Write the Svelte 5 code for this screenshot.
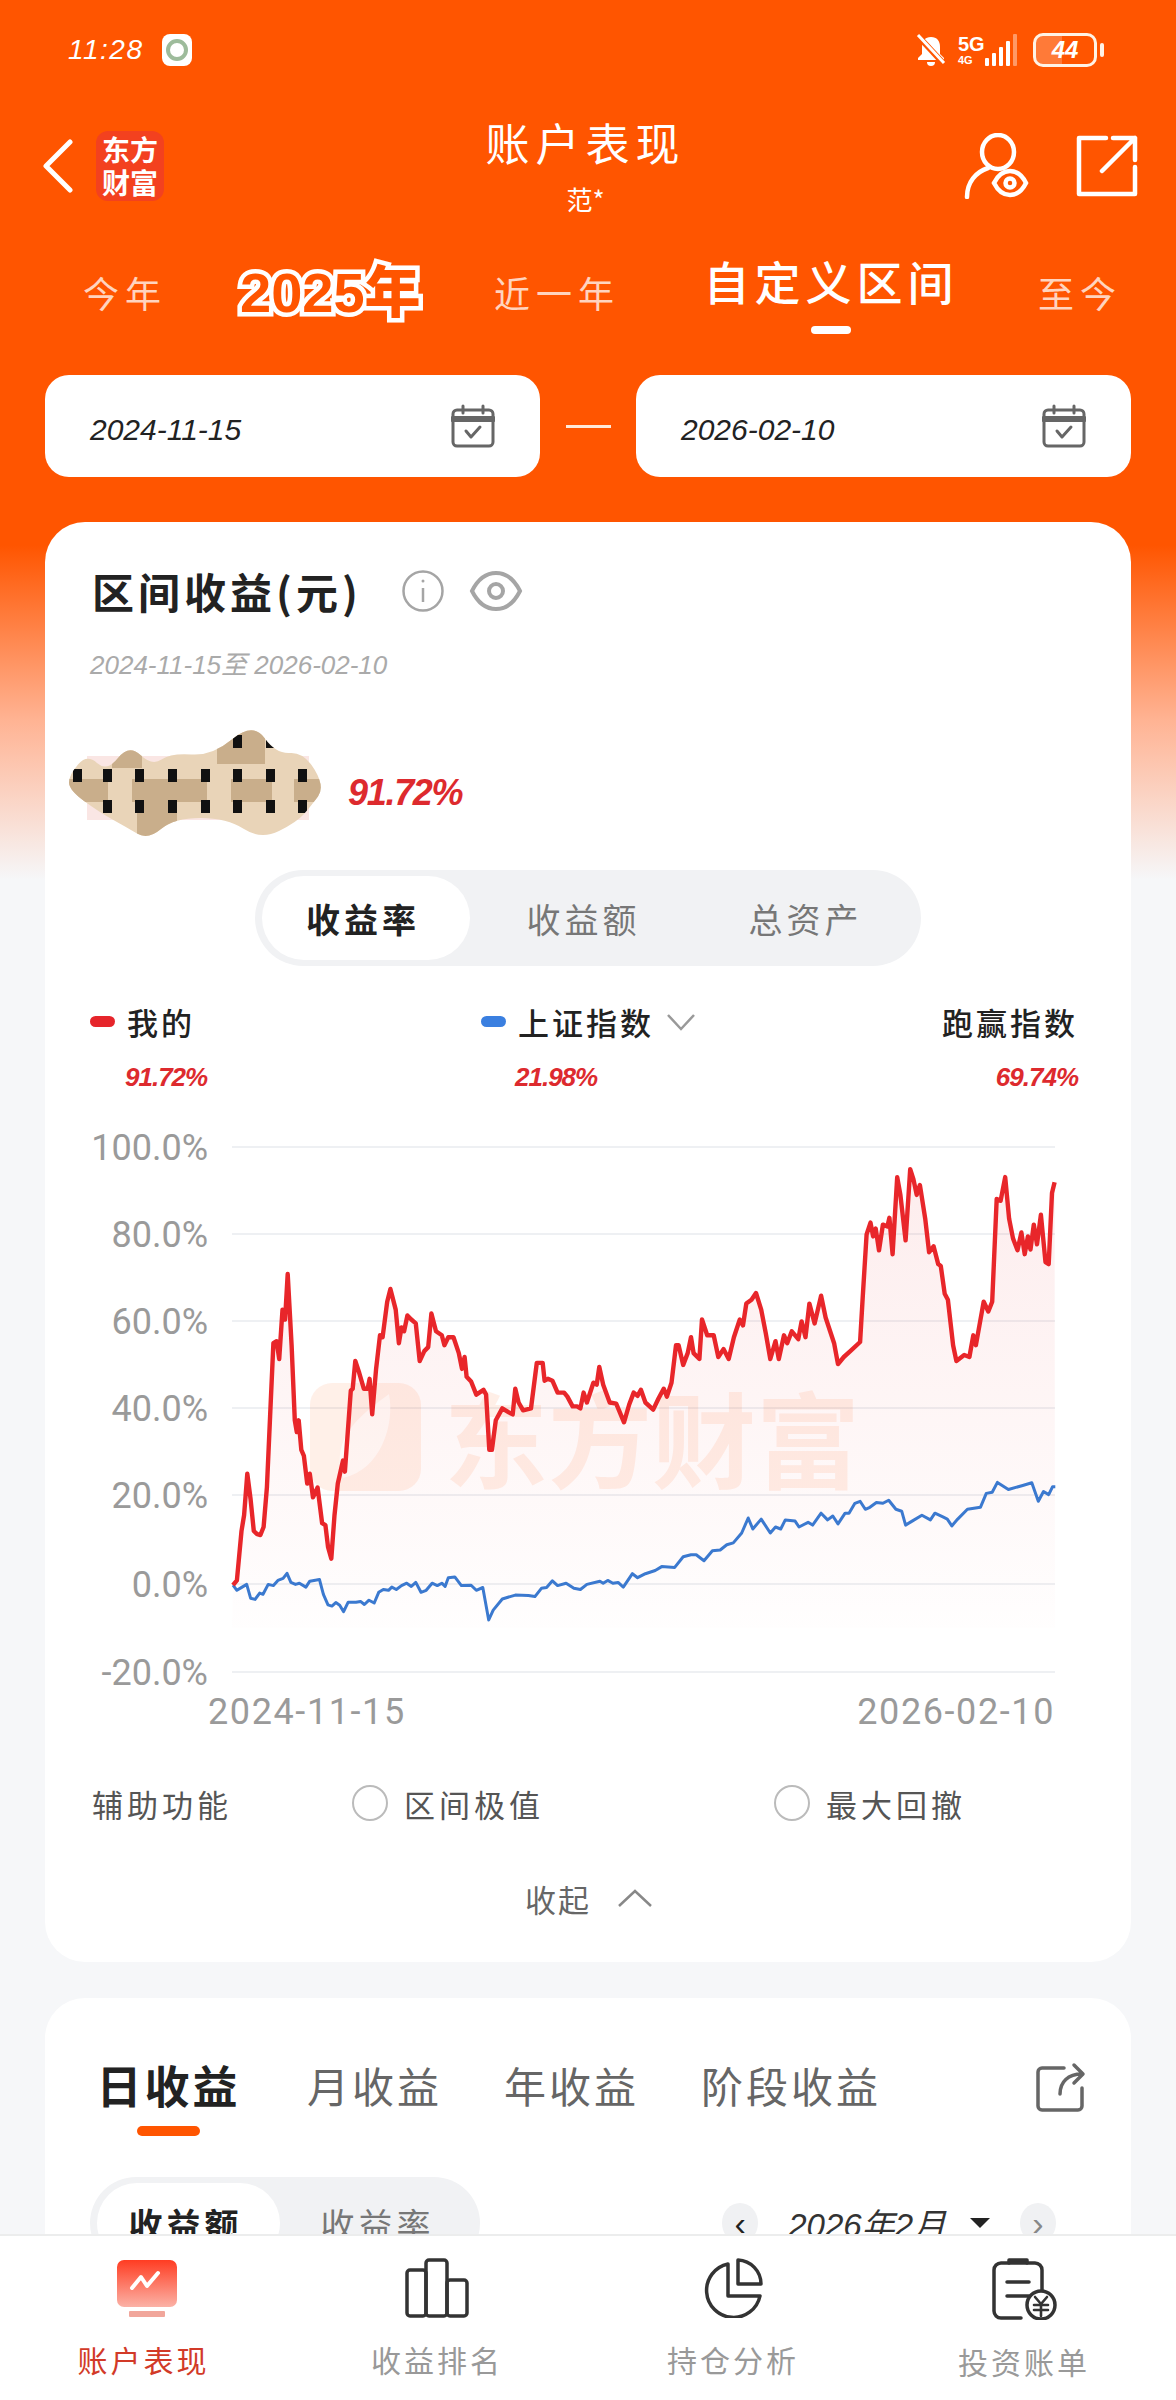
<script>
  // chart traces, read off the reference (zoom coordinates of the chart crop)
  const redRaw = [266,1227,272,1215,279,1090,283,1050,288,945,293,1010,298,1090,303,1098,308,1100,313,1080,318,980,323,800,328,615,333,610,337,655,342,530,346,555,350,440,356,620,361,810,364,840,367,810,371,885,375,900,380,970,384,945,389,1005,396,980,403,1070,408,1075,412,1130,417,1160,422,1050,427,970,435,912,438,940,447,735,450,730,454,660,460,690,467,730,473,730,476,705,480,795,486,680,492,595,496,600,503,510,508,478,516,530,521,615,525,575,529,585,534,545,540,555,547,565,553,660,560,635,566,625,571,540,578,585,587,595,591,620,597,600,605,600,613,640,618,680,622,650,625,700,632,712,640,745,651,733,655,745,660,885,664,885,670,810,680,780,690,790,696,795,700,730,705,765,712,785,724,780,733,665,742,665,745,710,750,705,757,710,765,740,775,740,780,750,788,775,795,775,800,780,805,740,810,765,820,715,825,720,829,675,835,720,845,765,855,768,867,815,875,770,882,740,888,748,893,733,900,765,912,783,920,755,928,730,933,750,940,715,947,620,951,620,958,670,965,640,970,600,974,640,983,655,987,555,995,595,1005,595,1012,650,1020,630,1028,655,1036,600,1045,555,1050,570,1055,515,1063,505,1070,488,1078,530,1085,590,1092,655,1100,610,1105,655,1113,595,1118,615,1125,585,1135,605,1140,560,1146,600,1152,515,1160,565,1170,495,1177,550,1185,590,1190,615,1196,668,1205,650,1215,635,1230,612,1234,500,1240,340,1246,310,1250,345,1254,325,1259,380,1265,315,1272,320,1275,298,1280,390,1287,195,1292,240,1300,355,1307,175,1312,200,1317,240,1322,215,1330,300,1336,385,1343,370,1350,415,1354,420,1360,490,1365,505,1373,620,1378,660,1390,645,1398,650,1404,595,1408,620,1420,510,1427,535,1433,510,1440,250,1446,255,1453,195,1459,300,1465,350,1472,380,1478,335,1483,390,1488,345,1492,378,1497,315,1502,365,1508,290,1515,410,1520,415,1525,235,1529,208];
  const blueRaw = [266,1227,272,1240,280,1232,287,1225,293,1260,300,1263,307,1247,312,1250,320,1225,328,1228,335,1215,343,1210,349,1197,355,1220,362,1225,368,1222,378,1232,384,1217,399,1213,405,1250,412,1277,418,1280,424,1271,430,1278,436,1294,443,1270,455,1270,462,1268,468,1276,475,1265,483,1272,490,1245,497,1238,505,1240,510,1232,517,1238,525,1228,533,1222,540,1230,547,1220,555,1245,563,1240,572,1222,580,1228,587,1222,592,1230,597,1208,607,1206,617,1228,632,1227,640,1240,650,1233,659,1315,666,1290,680,1262,700,1252,720,1253,730,1256,740,1235,748,1233,757,1216,765,1228,778,1222,790,1235,800,1238,810,1225,830,1217,835,1222,842,1215,850,1222,858,1220,866,1232,880,1198,888,1208,900,1198,915,1190,925,1180,945,1182,958,1155,970,1150,978,1150,990,1165,1003,1140,1015,1138,1025,1125,1035,1120,1048,1095,1058,1057,1065,1085,1078,1060,1092,1095,1100,1080,1108,1085,1115,1062,1130,1065,1136,1080,1150,1068,1157,1075,1170,1045,1180,1062,1188,1052,1196,1072,1207,1045,1213,1045,1222,1020,1230,1015,1238,1035,1245,1030,1255,1018,1265,1020,1274,1012,1285,1035,1294,1040,1300,1075,1310,1065,1325,1050,1338,1062,1345,1045,1358,1055,1364,1060,1371,1077,1380,1060,1395,1035,1415,1030,1424,995,1433,992,1441,967,1458,985,1480,975,1494,968,1504,1015,1512,990,1520,998,1526,978,1530,978];

  // chart svg starts at x 45, y 1120 of the page
  const toPoints = (raw) => {
    const out = [];
    for (let i = 0; i < raw.length; i += 2) {
      const x = 60 + raw[i] / 1.5373 - 45;
      const y = 1100 + raw[i + 1] / 2.529 - 1120;
      out.push(x.toFixed(1) + "," + y.toFixed(1));
    }
    return out.join(" ");
  };
  const redLine = toPoints(redRaw);
  const blueLine = toPoints(blueRaw);
  const redArea = "187,508 " + redLine + " 1010,508";

  const grid = [
    { label: "100.0%", y: 27 },
    { label: "80.0%", y: 114 },
    { label: "60.0%", y: 201 },
    { label: "40.0%", y: 288 },
    { label: "20.0%", y: 375 },
    { label: "0.0%", y: 464 },
    { label: "-20.0%", y: 552 },
  ];

  const squares = [];
  for (const x of [6, 36, 68, 101, 134, 166, 199, 231]) {
    squares.push({ x, y: 41 }, { x, y: 72 });
  }
  squares.push({ x: 166, y: 7 }, { x: 199, y: 7 });

  // outline of the scribbled-over amount, smoothed through the midpoints
  const blobPts = [[2,47],[20,26],[40,44],[62,16],[85,38],[104,25],[145,28],[186,-6],[209,26],[237,24],[258,59],[244,78],[230,94],[194,112],[160,90],[107,90],[81,112],[59,99],[32,84],[2,62]];
  const mid = (a, b) => ((a[0] + b[0]) / 2).toFixed(1) + " " + ((a[1] + b[1]) / 2).toFixed(1);
  const blobPath =
    "M" + mid(blobPts[blobPts.length - 1], blobPts[0]) +
    blobPts.map((p, i) => "Q" + p[0] + " " + p[1] + " " + mid(p, blobPts[(i + 1) % blobPts.length])).join("") +
    "Z";
</script>

<div class="page">
  <div class="scroll">
    <header class="status">
      <span class="time">11:28</span>
      <span class="app-dot"><i></i></span>
      <span class="status-right">
        <svg width="32" height="34" viewBox="0 0 32 34" fill="#fff">
          <path d="M16 4c-6 0-9 4-9 10v7l-4 4v2h26v-2l-4-4v-7c0-6-3-10-9-10z" />
          <path d="M12 29h8a4 4 0 0 1-8 0z" />
          <path d="M3 3l26 28" stroke="#ff5500" stroke-width="6" />
          <path d="M3 2l26 28" stroke="#fff" stroke-width="3" />
        </svg>
        <span class="net">5G<small>4G</small></span>
        <svg class="bars" width="36" height="34" viewBox="0 0 36 34" fill="#fff">
          <rect x="0" y="25" width="4" height="8" rx="1" />
          <rect x="7" y="20" width="4" height="13" rx="1" />
          <rect x="14" y="14" width="4" height="19" rx="1" />
          <rect x="21" y="8" width="4" height="25" rx="1" />
          <rect x="28" y="1" width="4" height="32" rx="1" opacity=".4" />
        </svg>
        <span class="battery"><b>44</b></span>
        <span class="nub"></span>
      </span>
    </header>

    <div class="head">
      <div class="head-left">
        <svg width="32" height="54" viewBox="0 0 32 54" fill="none" stroke="#fff" stroke-width="5" stroke-linecap="round" stroke-linejoin="round">
          <path d="M28 3 4 27l24 24" />
        </svg>
        <span class="logo">东方<br />财富</span>
      </div>
      <div class="head-title">
        <div class="title">账户表现</div>
        <div class="sub">范*</div>
      </div>
      <div class="head-right">
        <svg width="66" height="66" viewBox="0 0 66 66" fill="none" stroke="#fff" stroke-width="4.5" stroke-linecap="round">
          <ellipse cx="34" cy="19" rx="16" ry="17" />
          <path d="M3 64c0-15 9-25 21-29" />
          <path d="M30 50c4-8 10-12 16-12s12 4 16 12c-4 8-10 12-16 12s-12-4-16-12z" />
          <circle cx="46" cy="50" r="4.5" />
        </svg>
        <svg width="62" height="62" viewBox="0 0 62 62" fill="none" stroke="#fff" stroke-width="4.5" stroke-linecap="round" stroke-linejoin="round">
          <path d="M30 3H3v56h56V32" />
          <path d="M26 36 59 3M37 3h22v22" />
        </svg>
      </div>
    </div>

    <div class="periods">
      <span class="period">今年</span>
      <span class="period year">2025年</span>
      <span class="period">近一年</span>
      <span class="period active">自定义区间<i></i></span>
      <span class="period">至今</span>
    </div>

    <div class="dates">
      <div class="date">
        <span>2024-11-15</span>
        <svg width="44" height="44" viewBox="0 0 44 44" fill="none" stroke="#666" stroke-width="3" stroke-linecap="round" stroke-linejoin="round">
          <rect x="2" y="6" width="40" height="36" rx="4" />
          <path d="M2 15h40" stroke-width="6" />
          <path d="M12 2v7M32 2v7" />
          <path d="m15 27 5 6 9-10" />
        </svg>
      </div>
      <span class="dash"></span>
      <div class="date">
        <span>2026-02-10</span>
        <svg width="44" height="44" viewBox="0 0 44 44" fill="none" stroke="#666" stroke-width="3" stroke-linecap="round" stroke-linejoin="round">
          <rect x="2" y="6" width="40" height="36" rx="4" />
          <path d="M2 15h40" stroke-width="6" />
          <path d="M12 2v7M32 2v7" />
          <path d="m15 27 5 6 9-10" />
        </svg>
      </div>
    </div>

    <section class="card">
      <div class="card-title">
        <h2>区间收益(元)</h2>
        <svg class="info" width="42" height="42" viewBox="0 0 42 42" fill="none" stroke="#a5a5a5" stroke-width="2.5">
          <circle cx="21" cy="21" r="19.5" />
          <path d="M21 18v14" />
          <circle cx="21" cy="11" r="1.5" fill="#a5a5a5" stroke="none" />
        </svg>
        <svg class="eye" width="54" height="42" viewBox="0 0 54 42" fill="none" stroke="#a5a5a5" stroke-width="4">
          <path d="M3 21C9 9 17 3 27 3s18 6 24 18c-6 12-14 18-24 18S9 33 3 21z" />
          <circle cx="27" cy="21" r="7" />
        </svg>
      </div>
      <div class="range">2024-11-15至 2026-02-10</div>

      <div class="amount">
        <svg width="256" height="108" viewBox="0 0 256 108">
          <defs>
            <clipPath id="blob">
              <path d={blobPath} />
            </clipPath>
          </defs>
          <rect x="20" y="28" width="222" height="64" fill="#f6d5d2" opacity=".6" />
          <g clip-path="url(#blob)">
            <rect width="256" height="108" fill="#e9d4b8" />
            <rect y="51" width="256" height="23" fill="#c9ae8b" />
            <rect x="150" width="48" height="36" fill="#c9ae8b" />
            <rect x="70" y="74" width="40" height="34" fill="#c9ae8b" />
            <rect x="45" y="18" width="30" height="22" fill="#c9ae8b" />
            <rect x="41" y="51" width="24" height="23" fill="#e9d4b8" />
            <rect x="205" y="51" width="22" height="23" fill="#e9d4b8" />
            <rect x="140" y="51" width="24" height="23" fill="#e9d4b8" />
            {#each squares as s}
              <rect x={s.x} y={s.y} width="9" height="13" fill="#111" />
            {/each}
          </g>
        </svg>
        <span class="rate">91.72%</span>
      </div>

      <div class="seg-wrap">
        <div class="seg">
          <span class="seg-item on">收益率</span>
          <span class="seg-item">收益额</span>
          <span class="seg-item">总资产</span>
        </div>
      </div>

      <div class="legend">
        <span class="legend-item"><i class="red"></i>我的</span>
        <span class="legend-item">
          <i class="blue"></i>上证指数
          <svg width="30" height="18" viewBox="0 0 30 18" fill="none" stroke="#999" stroke-width="2.5"><path d="m2 2 13 14L28 2" /></svg>
        </span>
        <span class="legend-item">跑赢指数</span>
      </div>
      <div class="values">
        <span class="v1">91.72%</span>
        <span class="v2">21.98%</span>
        <span class="v3">69.74%</span>
      </div>

      <svg class="chart" width="1086" height="620" viewBox="0 0 1086 620">
        <defs>
          <linearGradient id="areaFill" x1="0" y1="0" x2="0" y2="1">
            <stop offset="0" stop-color="#e8262a" stop-opacity=".085" />
            <stop offset="1" stop-color="#e8262a" stop-opacity=".006" />
          </linearGradient>
        </defs>
        {#each grid as g}
          <line x1="187" x2="1010" y1={g.y} y2={g.y} stroke="#e8ebef" stroke-width="1.5" />
          <text x="163" y={g.y + 13} text-anchor="end" class="axis">{g.label}</text>
        {/each}
        <g class="watermark">
          <rect x="265" y="263" width="111" height="108" rx="22" fill="#ff5500" opacity=".09" />
          <path d="M298 358c-14-42 22-66 46-84 6 30-8 76-46 84z" fill="#fff" opacity=".7" />
          <text x="399" y="361" class="mark">东方财富</text>
        </g>
        <polygon points={redArea} fill="url(#areaFill)" />
        <polyline points={blueLine} fill="none" stroke="#3b79cf" stroke-width="3" stroke-linejoin="round" />
        <polyline points={redLine} fill="none" stroke="#e8262a" stroke-width="4.4" stroke-linejoin="round" />
        <text x="163" y="604" class="axis dates-x">2024-11-15</text>
        <text x="1010" y="604" text-anchor="end" class="axis dates-x">2026-02-10</text>
      </svg>

      <div class="aux">
        <span class="aux-name">辅助功能</span>
        <span class="aux-opt first"><i></i>区间极值</span>
        <span class="aux-opt second"><i></i>最大回撤</span>
      </div>

      <div class="collapse">
        <span>收起</span>
        <svg width="36" height="20" viewBox="0 0 36 20" fill="none" stroke="#888" stroke-width="2.5"><path d="M2 18 18 3l16 15" /></svg>
      </div>
    </section>

    <section class="card second-card">
      <div class="income-tabs">
        <div class="income-on">日收益<i></i></div>
        <span class="t2">月收益</span>
        <span class="t3">年收益</span>
        <span class="t4">阶段收益</span>
        <svg class="share" width="50" height="50" viewBox="0 0 50 50" fill="none" stroke="#666" stroke-width="3.5" stroke-linecap="round" stroke-linejoin="round">
          <path d="M28 6H6a4 4 0 0 0-4 4v34a4 4 0 0 0 4 4h36a4 4 0 0 0 4-4V26" />
          <path d="M24 32c0-12 8-20 22-20M38 3l9 9-9 9" />
        </svg>
      </div>
      <div class="sub-row">
        <div class="seg small">
          <span class="seg-item on">收益额</span>
          <span class="seg-item">收益率</span>
        </div>
        <div class="month">
          <span class="circle dark">‹</span>
          <span class="month-text">2026年2月</span>
          <span class="tri"></span>
          <span class="circle">›</span>
        </div>
      </div>
      <div class="rest"></div>
    </section>
  </div>

  <nav class="tabbar">
    <div class="tab current">
      <svg class="tab-icon-first" width="62" height="60" viewBox="0 0 62 60">
        <defs>
          <linearGradient id="tabRed" x1="0" y1="0" x2="0" y2="1">
            <stop offset="0" stop-color="#ff3c22" />
            <stop offset="1" stop-color="#fbb2a6" />
          </linearGradient>
        </defs>
        <rect x="1" y="2" width="60" height="47" rx="7" fill="url(#tabRed)" />
        <path d="M16 30 25 19l6 9 11-13" fill="none" stroke="#fff" stroke-width="4" stroke-linecap="round" stroke-linejoin="round" />
        <rect x="13" y="53" width="36" height="6" rx="1" fill="#f1a69b" />
      </svg>
      <span>账户表现</span>
    </div>
    <div class="tab">
      <svg width="64" height="60" viewBox="0 0 64 60" fill="none" stroke="#333" stroke-width="3.5" stroke-linejoin="round">
        <rect x="2" y="12" width="19" height="46" rx="3" />
        <rect x="21" y="2" width="21" height="56" rx="3" />
        <rect x="42" y="22" width="20" height="36" rx="3" />
      </svg>
      <span>收益排名</span>
    </div>
    <div class="tab">
      <svg width="62" height="60" viewBox="0 0 62 60" fill="none" stroke="#333" stroke-width="3.5" stroke-linejoin="round">
        <path d="M26 6a27 27 0 1 0 32 32H26z" />
        <path d="M36 2a24 24 0 0 1 23 24H36z" />
      </svg>
      <span>持仓分析</span>
    </div>
    <div class="tab">
      <svg width="66" height="62" viewBox="0 0 66 62" fill="none" stroke="#333" stroke-width="3.5" stroke-linecap="round" stroke-linejoin="round">
        <path d="M30 60H10a7 7 0 0 1-7-7V12a7 7 0 0 1 7-7h34a7 7 0 0 1 7 7v20" />
        <path d="M18 5V2h18v3" fill="#333" />
        <path d="M16 24h22M16 38h22" />
        <circle cx="50" cy="47" r="14" />
        <path d="m44 39 6 7 6-7M43 47h14M43 52h14M50 46v12" stroke-width="2.6" />
      </svg>
      <span>投资账单</span>
    </div>
  </nav>
</div>

<style>
  :global(body) {
    margin: 0;
    background: #f6f7f9;
  }

  .page {
    width: 1176px;
    height: 2400px;
    display: flex;
    flex-direction: column;
    overflow: hidden;
    font-family: "Noto Sans CJK SC", "Noto Sans", sans-serif;
    color: #222;
  }

  .scroll {
    flex: 1;
    min-height: 0;
    overflow: hidden;
    background: linear-gradient(#ff5500 0, #ff5500 545px, #ffb393 720px, #f6f7f9 880px);
  }

  /* status bar */
  .status {
    height: 100px;
    display: flex;
    align-items: center;
    padding: 0 78px 0 68px;
    color: #fff;
    box-sizing: border-box;
  }
  .time {
    font: italic 28px "Liberation Sans", sans-serif;
    letter-spacing: 1.5px;
  }
  .app-dot {
    width: 30px;
    height: 32px;
    margin-left: 18px;
    border-radius: 8px;
    background: #fff;
    display: flex;
    align-items: center;
    justify-content: center;
  }
  .app-dot i {
    width: 14px;
    height: 14px;
    border: 4px solid #9dbb9b;
    border-radius: 50%;
  }
  .status-right {
    margin-left: auto;
    display: flex;
    align-items: center;
  }
  .net {
    margin-left: 11px;
    font: 700 20px/20px "Liberation Sans", sans-serif;
    display: flex;
    flex-direction: column;
    width: 26px;
  }
  .net small {
    font-size: 11px;
    line-height: 13px;
  }
  .bars {
    margin-left: 1px;
  }
  .battery {
    width: 64px;
    height: 34px;
    margin-left: 12px;
    box-sizing: border-box;
    border: 3px solid #fff3e6;
    border-radius: 10px;
    background: linear-gradient(90deg, rgba(255, 255, 255, 0.22) 44%, transparent 44%);
    display: flex;
    align-items: center;
    justify-content: center;
  }
  .battery b {
    font: italic 700 24px "Liberation Sans", sans-serif;
  }
  .nub {
    width: 4px;
    height: 14px;
    margin-left: 3px;
    margin-right: -6px;
    border-radius: 2px;
    background: #fff3e6;
  }

  /* title row */
  .head {
    display: grid;
    grid-template-columns: 1fr auto 1fr;
    align-items: center;
    padding: 17px 38px 0 42px;
    color: #fff;
  }
  .head-left {
    display: flex;
    align-items: center;
    gap: 22px;
  }
  .logo {
    width: 68px;
    height: 70px;
    border-radius: 12px;
    background: #f3411f;
    font-size: 28px;
    font-weight: 700;
    line-height: 33px;
    text-align: center;
    display: flex;
    align-items: center;
    justify-content: center;
  }
  .head-title {
    text-align: center;
    margin-right: 9px;
  }
  .title {
    font-size: 44px;
    line-height: 50px;
    letter-spacing: 6px;
  }
  .sub {
    margin-top: 17px;
    font-size: 26px;
    line-height: 30px;
  }
  .head-right {
    display: flex;
    align-items: center;
    justify-content: flex-end;
    gap: 46px;
  }

  /* period tabs */
  .periods {
    margin-top: 46px;
    height: 74px;
    padding-left: 83px;
    display: grid;
    grid-template-columns: 157px 254px 211px 333px auto;
    align-items: center;
    color: rgba(255, 255, 255, 0.75);
  }
  .period {
    font-size: 36px;
    line-height: 44px;
    letter-spacing: 6px;
    padding-bottom: 10px;
  }
  .year {
    font: 900 56px/54px "Liberation Sans", "Noto Sans CJK SC", sans-serif;
    letter-spacing: 0;
    color: #ff5500;
    -webkit-text-stroke: 9px #fff;
    paint-order: stroke fill;
    padding-bottom: 8px;
  }
  .active {
    color: #fff;
    font-size: 46px;
    font-weight: 500;
    line-height: 48px;
    letter-spacing: 5px;
    display: flex;
    flex-direction: column;
    align-items: center;
    width: 252px;
    height: 78px;
    box-sizing: border-box;
    padding: 0;
    margin-top: -4px;
    white-space: nowrap;
  }
  .active i {
    width: 40px;
    height: 8px;
    margin-top: 22px;
    border-radius: 4px;
    background: #fff;
  }

  /* date pickers */
  .dates {
    margin: 41px 45px 0;
    display: flex;
    align-items: center;
    justify-content: space-between;
  }
  .date {
    width: 495px;
    height: 102px;
    box-sizing: border-box;
    padding: 0 45px;
    border-radius: 24px;
    background: #fff;
    display: flex;
    align-items: center;
    justify-content: space-between;
    color: #222;
  }
  .date span {
    font: italic 30px "Liberation Sans", sans-serif;
    padding-top: 8px;
  }
  .dash {
    width: 45px;
    height: 3px;
    background: #ffe9d8;
  }

  /* cards */
  .card {
    margin: 45px 45px 0;
    padding: 48px 53px 44px 47px;
    border-radius: 40px;
    background: #fff;
  }
  .card-title {
    display: flex;
    align-items: center;
    height: 42px;
  }
  h2 {
    margin: 0;
    font-size: 42px;
    font-weight: 700;
    letter-spacing: 4px;
    line-height: 42px;
    white-space: nowrap;
  }
  .info {
    margin-left: 40px;
  }
  .eye {
    margin-left: 25px;
  }
  .range {
    margin: 41px 0 0 -2px;
    height: 24px;
    font: italic 26px/24px "Liberation Sans", "Noto Sans CJK SC", sans-serif;
    color: #aaa;
  }
  .amount {
    margin: 51px 0 0 -25px;
    height: 108px;
    display: flex;
    align-items: center;
  }
  .rate {
    margin: 22px 0 0 25px;
    font: italic 700 36px "Liberation Sans", sans-serif;
    letter-spacing: -1.3px;
    color: #dd2a2e;
  }

  .seg-wrap {
    margin: 34px 0 0 163px;
  }
  .seg {
    width: 666px;
    height: 96px;
    box-sizing: border-box;
    padding: 6px 7px;
    border-radius: 48px;
    background: #f1f2f4;
    display: flex;
  }
  .seg-item {
    width: 222px;
    padding-left: 5px;
    box-sizing: border-box;
    display: flex;
    align-items: center;
    justify-content: center;
    font-size: 34px;
    letter-spacing: 4px;
    color: #777;
  }
  .seg-item:first-child {
    width: 208px;
  }
  .seg-item.on {
    padding-left: 0;
    padding-right: 6px;
    border-radius: 42px;
    background: #fff;
    color: #222;
    font-weight: 700;
  }

  .legend {
    margin: 33px 0 0 -2px;
    height: 40px;
    display: grid;
    grid-template-columns: 391px 1fr auto;
    align-items: center;
  }
  .legend-item {
    display: flex;
    align-items: center;
    font-size: 31px;
    font-weight: 500;
    letter-spacing: 3px;
  }
  .legend-item i {
    width: 25px;
    height: 11px;
    margin-right: 12px;
    border-radius: 6px;
  }
  .legend-item svg {
    margin-left: 12px;
  }
  .red {
    background: #e6252b;
  }
  .blue {
    background: #3a7fe0;
  }
  .values {
    margin: 22px 0 0 -2px;
    height: 32px;
    display: grid;
    grid-template-columns: 391px 1fr auto;
    font: italic 700 26px/32px "Liberation Sans", sans-serif;
    letter-spacing: -1px;
    color: #dd2a2e;
  }
  .v1 {
    padding-left: 35px;
  }
  .v2 {
    padding-left: 34px;
  }

  .chart {
    display: block;
    margin: 27px 0 0 -47px;
  }
  .axis {
    font: 36px Roboto, sans-serif;
    fill: #9a9a9a;
  }
  .dates-x {
    letter-spacing: 1.6px;
  }
  .mark {
    font: 700 104px "Noto Sans CJK SC", sans-serif;
    fill: #ff5500;
    opacity: 0.09;
  }

  .aux {
    margin-top: 43px;
    height: 40px;
    display: flex;
    align-items: center;
    font-size: 31px;
    letter-spacing: 4px;
    color: #555;
  }
  .aux-opt {
    display: flex;
    align-items: center;
    gap: 16px;
  }
  .aux-opt i {
    width: 32px;
    height: 32px;
    border: 2px solid #bbb;
    border-radius: 50%;
  }
  .aux-name {
    width: 260px;
  }
  .first {
    width: 422px;
  }
  .collapse {
    margin-top: 55px;
    height: 40px;
    padding-left: 8px;
    display: flex;
    align-items: center;
    justify-content: center;
    gap: 26px;
    font-size: 31px;
    letter-spacing: 2px;
    color: #666;
  }

  .second-card {
    margin-top: 36px;
    padding: 64px 45px 0;
  }
  .income-tabs {
    display: flex;
    align-items: flex-start;
    height: 74px;
    font-size: 42px;
    line-height: 46px;
    letter-spacing: 3px;
    color: #666;
  }
  .income-on {
    width: 143px;
    margin-left: 7px;
    font-size: 45px;
    font-weight: 700;
    color: #222;
    display: flex;
    flex-direction: column;
    align-items: center;
    white-space: nowrap;
  }
  .income-on i {
    width: 63px;
    height: 10px;
    margin-top: 18px;
    border-radius: 5px;
    background: #ff5500;
  }
  .t2 {
    margin-left: 67px;
  }
  .t3 {
    margin-left: 62px;
  }
  .t4 {
    margin-left: 62px;
  }
  .share {
    margin-left: auto;
    margin-right: 0;
  }
  .sub-row {
    margin-top: 41px;
    padding-right: 30px;
    display: flex;
    align-items: center;
    justify-content: space-between;
  }
  .seg.small {
    width: 390px;
    height: 92px;
  }
  .seg.small .seg-item {
    width: 183px;
  }
  .seg.small .seg-item:last-child {
    padding-left: 12px;
  }
  .month {
    display: flex;
    align-items: center;
  }
  .circle {
    width: 36px;
    height: 40px;
    border-radius: 50%;
    background: #f0f1f3;
    display: flex;
    align-items: center;
    justify-content: center;
    font: 34px/34px "Liberation Sans", sans-serif;
    color: #888;
  }
  .circle.dark {
    color: #222;
  }
  .month-text {
    margin-left: 30px;
    font-size: 33px;
    font-family: "Liberation Sans", "Noto Sans CJK SC", sans-serif;
    font-style: italic;
    color: #333;
  }
  .tri {
    margin: 0 30px 0 24px;
    width: 0;
    height: 0;
    border-left: 10px solid transparent;
    border-right: 10px solid transparent;
    border-top: 10px solid #222;
  }
  .rest {
    height: 300px;
  }

  /* bottom tabs */
  .tabbar {
    height: 166px;
    box-sizing: border-box;
    padding-top: 22px;
    border-top: 2px solid #eceded;
    background: #fff;
    display: grid;
    grid-template-columns: 287px 300px 292px 290px;
    flex-shrink: 0;
  }
  .tab {
    display: flex;
    flex-direction: column;
    align-items: center;
    font-size: 30px;
    letter-spacing: 3px;
    color: #999;
  }
  .tab svg {
    display: block;
    margin-bottom: 21px;
  }
  .tab .tab-icon-first {
    margin-left: 6px;
  }
  .tab span {
    line-height: 40px;
  }
  .current {
    color: #d23a28;
  }
</style>
